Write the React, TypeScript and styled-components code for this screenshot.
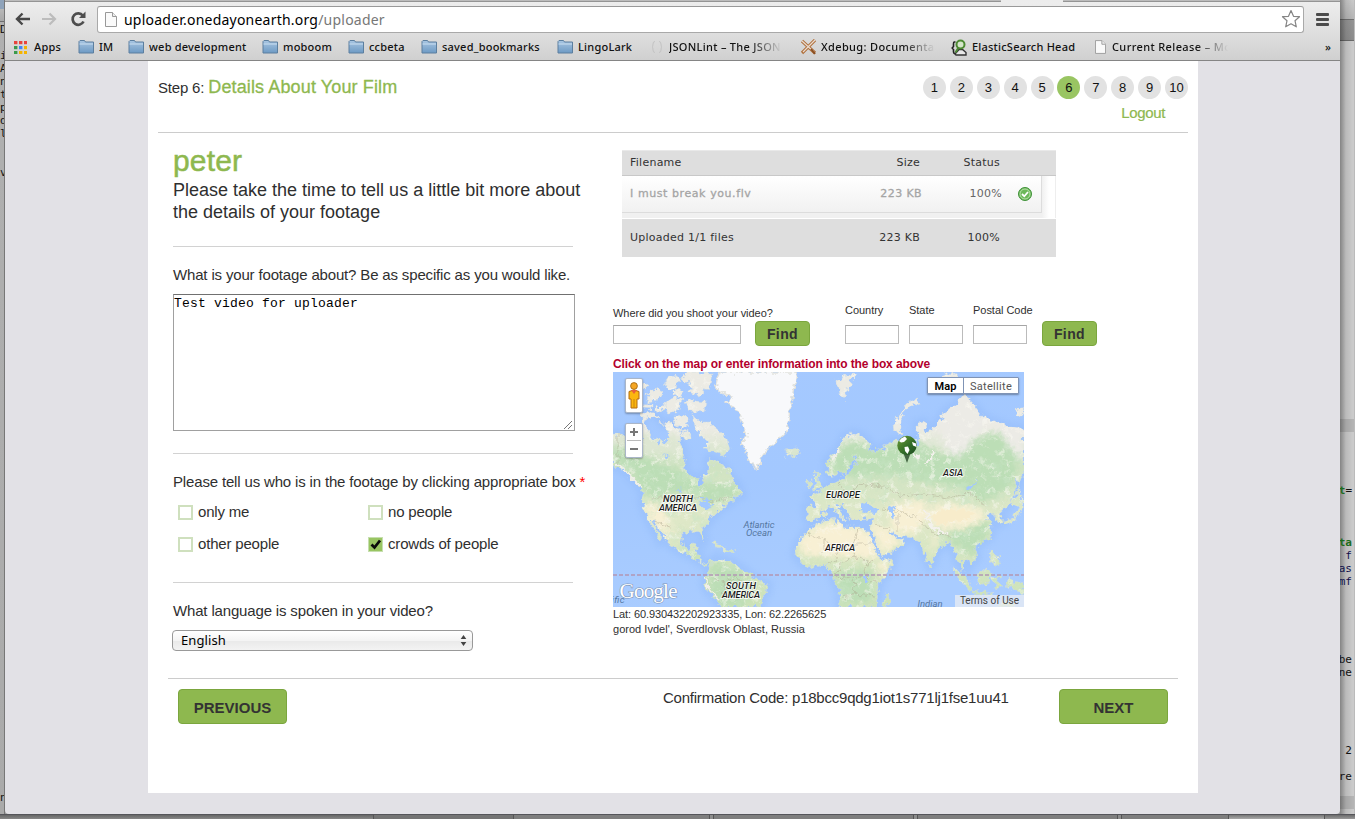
import React from 'react';
import styled, { createGlobalStyle } from 'styled-components';

const GlobalStyle = createGlobalStyle`
  * { box-sizing: border-box; }
  html, body { margin: 0; padding: 0; }
  body { width: 1355px; height: 819px; overflow: hidden; font-family: "Liberation Sans", Helvetica, Arial, sans-serif; color: #2f2f2f; }
`;

const ui = '"Noto Sans", "Lucida Grande", sans-serif';
const green = '#8eb84f';

/* Desktop behind the window */
const Desktop = styled.div`
  display: grid;
  grid-template-columns: 5px 1335px 15px;
  grid-template-rows: 814px 5px;
  width: 1355px;
  height: 819px;
  overflow: hidden;
  background: #9c9c9c;
`;
const LeftStrip = styled.div`
  overflow: hidden;
  border-right: 1px solid #777;
  background: linear-gradient(#8fa3ba 0, #8fa3ba 9px, #b8b8b8 9px, #a8a8a8 21px, #6e6e6e 21px, #6e6e6e 22px, #b0b0b0 22px, #aaa 100%);
  padding-top: 23px;
`;
const RightStrip = styled.div`
  overflow: hidden;
  display: flex;
  flex-direction: column;
  align-items: flex-end;
  padding: 41px 2px 0 0;
  border-right: 1px solid #bbb;
  background:
    linear-gradient(90deg, rgba(0,0,0,.35), rgba(0,0,0,.08) 6px, transparent 13px),
    linear-gradient(#c9c9c9 0, #b5b5b5 19px, #707070 19px, #707070 20px, #949494 20px, #8c8c8c 40px, #6a6a6a 40px, #6a6a6a 41px, #cbcbcb 41px, #cbcbcb 419px, #b4b4b4 419px, #b4b4b4 432px, #cbcbcb 432px, #cbcbcb 796px, #b4b4b4 796px, #b4b4b4 809px, #cbcbcb 809px);
`;
const Code = styled.pre<{ $top?: number; $tone?: string }>`
  margin: ${p => p.$top || 0}px 0 0;
  font: 11px/13px "DejaVu Sans Mono", monospace;
  color: ${p => p.$tone || '#111'};
`;
const Keyword = styled.b`color: #1d6b1d;`;
const BottomStrip = styled.div`
  grid-column: 1 / 4;
  display: flex;
  border-top: 1px solid #55555a;
  background: linear-gradient(#6b6b6b, #999);
`;
const Pane = styled.div<{ $w: number; $c: string }>`
  width: ${p => p.$w}px;
  background: ${p => p.$c};
  border-right: 1px solid #555;
`;

/* Browser window */
const Window = styled.div`
  display: flex;
  flex-direction: column;
  background: #e2e1e6;
  border-radius: 0 0 4px 4px;
  overflow: hidden;
`;
const Tabs = styled.div`
  height: 2px;
  display: flex;
  background: #bcbcbc;
  border-bottom: 1px solid #949494;
`;
const ActiveTab = styled.div`
  width: 62px;
  height: 2px;
  margin-left: 996px;
  background: #ececec;
`;
const NavBar = styled.div`
  height: 32px;
  display: flex;
  align-items: center;
  padding: 2px 11px 0 9px;
  background: linear-gradient(#ededed, #dedede);
`;
const Address = styled.div`
  width: 1207px;
  height: 27px;
  margin-left: 10px;
  display: flex;
  align-items: center;
  padding: 0 2px 0 7px;
  background: #fff;
  border: 1px solid #a9a9a9;
  border-top-color: #999;
  border-radius: 3px;
`;
const Url = styled.div`
  flex: 1;
  margin-left: 7px;
  font: 14px/20px ${ui};
  letter-spacing: 0.22px;
  color: #777;
  padding-top: 1px;
  b { font-weight: 400; color: #000; }
`;
const NavIcon = styled.div<{ $w: number }>`
  width: ${p => p.$w}px;
  display: flex;
  flex: none;
`;
const MenuIcon = styled.div`
  width: 13px;
  height: 13px;
  margin-left: 12px;
  display: flex;
  flex-direction: column;
  justify-content: space-between;
  i { height: 3px; border-radius: 1px; background: #4b4b4b; }
`;
const BookmarkBar = styled.div`
  height: 27px;
  display: flex;
  align-items: center;
  padding-left: 9px;
  background: linear-gradient(#dedede, #d0d0d0);
  border-bottom: 1px solid #858585;
`;
const Bookmark = styled.div<{ $w: number; $gap: number }>`
  width: ${p => p.$w}px;
  flex: none;
  display: flex;
  align-items: center;
  gap: ${p => p.$gap}px;
`;
const BookmarkText = styled.span<{ $max?: number; $ls?: number }>`
  font: 500 11px/16px ${ui};
  letter-spacing: ${p => p.$ls ?? 0.22}px;
  color: #111;
  white-space: nowrap;
  overflow: hidden;
  ${p => p.$max ? `width: ${p.$max}px; -webkit-mask-image: linear-gradient(90deg, #000 ${p.$max - 32}px, transparent);mask-image: linear-gradient(90deg, #000 ${p.$max - 32}px, transparent);` : ''}
`;

/* Page */
const Page = styled.main`
  width: 1050px;
  height: 732px;
  margin-left: 143px;
  background: #fff;
`;
const Header = styled.header`
  height: 72px;
  margin: 0 10px;
  display: flex;
  justify-content: space-between;
  border-bottom: 1px solid #ccc;
`;
const StepTitle = styled.h1`
  margin: 15px 0 0;
  font-size: 15px;
  line-height: 22px;
  font-weight: 400;
  letter-spacing: -0.18px;
  height: 22px;
  span { font-size: 18px; letter-spacing: 0.13px; color: ${green}; -webkit-text-stroke: .3px ${green}; }
`;
const StepsArea = styled.div`
  display: flex;
  flex-direction: column;
  align-items: flex-end;
`;
const Steps = styled.nav`
  display: flex;
  gap: 3.9px;
  margin-top: 15px;
`;
const Step = styled.span<{ $on?: boolean }>`
  width: 23px;
  height: 23px;
  border-radius: 50%;
  background: ${p => p.$on ? '#99c562' : '#e2e2e2'};
  font-size: 13px;
  line-height: 23px;
  text-align: center;
  color: #111;
`;
const Logout = styled.a`
  margin: 5px 23px 0 0;
  font-size: 15px;
  line-height: 18px;
  letter-spacing: -0.35px;
  color: ${green};
  -webkit-text-stroke: .2px ${green};
`;
const Columns = styled.div`
  height: 545px;
  display: grid;
  grid-template-columns: 440px 1fr;
  padding-left: 25px;
`;
const Column = styled.section`min-width: 0;`;
const UserName = styled.h2`
  margin: 11px 0 1px;
  font-size: 30px;
  line-height: 34px;
  font-weight: 400;
  letter-spacing: 0.15px;
  color: ${green};
  -webkit-text-stroke: .5px ${green};
`;
const Intro = styled.p`
  margin: 0;
  font-size: 18px;
  line-height: 22px;
  white-space: nowrap;
`;
const Rule = styled.div<{ $top: number }>`
  width: 400px;
  height: 1px;
  margin-top: ${p => p.$top}px;
  background: #d2d2d2;
`;
const Question = styled.div`
  margin-top: 19px;
  font-size: 15px;
  line-height: 18px;
  letter-spacing: -0.16px;
  white-space: nowrap;
  sup { color: #f00; font-size: 15px; line-height: 0; vertical-align: 0; margin-left: 0; }
`;
const Answer = styled.div`
  width: 402px;
  height: 137px;
  margin-top: 10px;
  padding: 1px 1px 0 0;
  display: flex;
  justify-content: space-between;
  border: 1px solid #a0a0a0;
  border-top-color: #707070;
  font: 13px/16px "Liberation Mono", monospace;
  letter-spacing: .2px;
  color: #000;
  svg { align-self: flex-end; }
`;
const Options = styled.div`
  display: grid;
  grid-template-columns: 190px 190px;
  grid-auto-rows: 32px;
  margin: 5px 0 0 5px;
`;
const Option = styled.label`
  display: flex;
  align-items: center;
  gap: 5px;
  padding-bottom: 1px;
  font-size: 15px;
  letter-spacing: -0.18px;
`;
const Box = styled.i<{ $on?: boolean }>`
  width: 15px;
  height: 15px;
  margin-top: 2px;
  display: flex;
  border: 2px solid ${p => p.$on ? '#c6dfae' : '#cfe0be'};
  border-width: ${p => p.$on ? 1 : 2}px;
  background: ${p => p.$on ? '#99c562' : '#fff'};
`;
const Select = styled.div`
  width: 301px;
  height: 21px;
  margin: 10px 0 0 -1px;
  padding: 0 5px 1px 8px;
  display: flex;
  align-items: center;
  justify-content: space-between;
  border: 1px solid #999;
  border-radius: 4px;
  background: linear-gradient(#fff 0, #f4f4f4 50%, #e9e9e9 51%, #f3f3f3 100%);
  font: 13px/18px ${ui};
  letter-spacing: .1px;
  color: #000;
`;

/* Upload list */
const UploadTable = styled.div`
  width: 434px;
  margin: 17px 0 0 9px;
  font: 11px/14px "DejaVu Sans", Verdana, sans-serif;
  letter-spacing: 0.25px;
  color: #333;
`;
const Cells = styled.div`
  display: flex;
  align-items: center;
  height: 100%;
`;
const HeadRow = styled.div`
  height: 26px;
  padding: 0 0 0 8px;
  background: #dedede;
  border-top: 1px solid #e9e9e9;
  border-bottom: 1px solid #c8c8c8;
`;
const FileArea = styled.div`
  height: 42px;
  padding-right: 1px;
  background: linear-gradient(90deg, #f0f0f0 420px, #fff 427px);
  border-right: 1px solid #eee;
`;
const FileRow = styled.div`
  width: 420px;
  height: 37px;
  padding: 0 0 0 8px;
  border-right: 1px solid #ddd;
  border-bottom: 1px solid #dcdcdc;
  background: linear-gradient(#fff, #f1f1f1);
  color: #a5a5a5;
`;
const FootRow = styled.div`
  height: 38px;
  margin-top: 1px;
  padding: 0 0 1px 8px;
  background: #dedede;
`;
const Cell = styled.span<{ $w: number; $right?: boolean; $tone?: string; $b?: boolean; $ls?: number }>`
  width: ${p => p.$w}px;
  text-align: ${p => p.$right ? 'right' : 'left'};
  color: ${p => p.$tone || 'inherit'};
  -webkit-text-stroke: ${p => p.$b ? '.3px #a5a5a5' : '0'};
  letter-spacing: ${p => p.$ls ?? 0.25}px;
  white-space: nowrap;
`;

/* Location search */
const Search = styled.div`
  height: 43px;
  margin-top: 46px;
  display: flex;
  align-items: flex-end;
`;
const Field = styled.label<{ $w: number; $mr: number; $gap: number }>`
  width: ${p => p.$w}px;
  margin: 0 ${p => p.$mr}px 2px 0;
  font-size: 11px;
  line-height: 13px;
  letter-spacing: -0.03px;
  white-space: nowrap;
  i {
    display: block;
    height: 19px;
    margin-top: ${p => p.$gap}px;
    border: 1px solid #bbb;
    border-top-color: #a5a5a5;
    background: #fff;
  }
`;
const Button = styled.button<{ $w: number; $h: number; $size: number; $mr?: number; $ls?: number }>`
  width: ${p => p.$w}px;
  height: ${p => p.$h}px;
  margin: 0 ${p => p.$mr || 0}px 0 0;
  padding: 1px 0 0;
  border: 1px solid #7ba63e;
  border-radius: 4px;
  background: ${green};
  font: bold ${p => p.$size}px "Liberation Sans", Helvetica, sans-serif;
  letter-spacing: ${p => p.$ls || 0}px;
  color: #333;
`;
const Hint = styled.div`
  margin: 11px 0 1px;
  font-size: 12px;
  line-height: 14px;
  font-weight: 700;
  letter-spacing: -0.1px;
  color: #b3002d;
`;
const MapFrame = styled.div`
  position: relative;
  width: 411px;
  height: 235px;
  overflow: hidden;
  > svg { display: block; }
`;
const MapTypes = styled.div`
  position: absolute;
  top: 5px;
  right: 5px;
  height: 17px;
  display: flex;
  background: #fff;
  border: 1px solid #7f93b5;
  border-radius: 1px;
  box-shadow: 0 1px 2px rgba(0,0,0,.35);
  font: 11px/17px Roboto, sans-serif;
  color: #555;
  span { width: 54px; text-align: center; letter-spacing: .3px; }
  b { width: 36px; text-align: center; color: #000; font-weight: 600; letter-spacing: .1px; border-right: 1px solid #7f93b5; }
`;
const Terms = styled.div`
  position: absolute;
  right: 0;
  bottom: 0;
  width: 69px;
  height: 12px;
  background: rgba(235,238,243,.75);
  font: 10px/12px Roboto, sans-serif;
  text-align: center;
  color: #444;
`;
const Pegman = styled.div`
  position: absolute;
  left: 12px;
  top: 6px;
  width: 18px;
  height: 35px;
  padding: 3px 0 0 2px;
  background: #fff;
  border: 1px solid #aab6c8;
  border-radius: 2px;
  box-shadow: 0 1px 2px rgba(0,0,0,.3);
`;
const Zoom = styled.div`
  position: absolute;
  left: 12px;
  top: 51px;
  width: 18px;
  height: 35px;
  background: #fff;
  border: 1px solid #aab6c8;
  border-radius: 2px;
  box-shadow: 0 1px 2px rgba(0,0,0,.3);
`;
const Place = styled.div<{ $ls: number }>`
  font-size: 11px;
  line-height: 15px;
  letter-spacing: ${p => p.$ls}px;
`;
const Footer = styled.footer`
  height: 46px;
  margin: 0 20px;
  padding: 10px 10px 0;
  display: flex;
  justify-content: space-between;
  border-top: 1px solid #ccc;
`;
const Confirm = styled.div`
  width: 396px;
  margin-left: 376px;
  font-size: 15px;
  line-height: 18px;
  letter-spacing: -0.23px;
  white-space: nowrap;
`;

const Folder = () => (
  <svg width="17" height="14" viewBox="0 0 17 14">
    <defs><linearGradient id="fold" x1="0" y1="0" x2="0" y2="1"><stop offset="0" stopColor="#a9c6e2" /><stop offset="1" stopColor="#6d9ac4" /></linearGradient></defs>
    <path d="M1 13V1.5L2 .5H6.5L7.5 2H15.5V13Z" fill="url(#fold)" stroke="#5c7f9f" />
    <path d="M1.5 4H15" stroke="#c9def0" />
  </svg>
);
const PageIcon = ({ w, h }: { w: number; h: number }) => (
  <svg width={w} height={h} viewBox="0 0 12 15"><path d="M.5.5H7.5L11.5 4.5V14.5H.5Z" fill="#fafafa" stroke="#999" /><path d="M7.5.5V4.5H11.5" fill="#eee" stroke="#999" /></svg>
);
const AppsIcon = () => {
  const c = ['#e8453c', '#e8453c', '#e8453c', '#3b9a4b', '#4285f4', '#f4b400', '#3b9a4b', '#f4b400', '#f4b400'];
  return <svg width="13" height="13">{c.map((f, i) => <rect key={i} x={(i % 3) * 5} y={Math.floor(i / 3) * 5} width="3.4" height="3.2" fill={f} />)}</svg>;
};
const BracesIcon = () => <svg width="12" height="14" fill="none" stroke="#c3c3c3"><path d="M4 1.5Q2 1.5 2 4 2 7 1 7 2 7 2 10 2 12.500 4 12.500M8 1.500Q10 1.500 10 4 10 7 11 7 10 7 10 10 10 12.500 8 12.500" /></svg>;
const XIcon = () => (
  <svg width="17" height="16" fill="none"><path d="M2 2L15 14M15 1L2 14" stroke="#b0703c" strokeWidth="3.200" /><path d="M2 2L14 13M15 1L3 13" stroke="#eadcd0" strokeWidth="1.200" /><path d="M11 10L15 15" stroke="#8a4f22" strokeWidth="2" /></svg>
);
const SearchHeadIcon = () => (
  <svg width="17" height="17" fill="none"><path d="M4.500 3H3Q2.500 3 2.500 5V7.500L1.200 9 2.500 10.500V13Q2.500 14.500 4 14.500" stroke="#222" strokeWidth="1.600" /><path d="M4 15L8 10.500H11.500L15 13.500V16H5Z" fill="#e8e8e8" stroke="#333" strokeWidth="1.400" /><circle cx="9.500" cy="5.500" r="4" fill="#d5e6cb" stroke="#4d8a33" strokeWidth="2" /><path d="M7.500 8.500L4.500 13.500" stroke="#4d8a33" strokeWidth="2" /></svg>
);

/* World map, in the 411 x 235 space of its frame */
const NA = 'M0 62L12 64 29 65 29 42 34 39 44 44 50 52 58 50 62 56 68 60 66 70 70 78 72 90 71 98 76 103 84 106 87 113 90 112 91 103 97 97 95 90 97 86 107 90 113 98 118 106 125 113 129 123 120 126 119 130 109 135 99 145 95 151 88 158 92 166 91 169 87 163 84 159 70 161 68 168 70 176 77 178 79 172 84 173 81 180 86 182 87 190 95 192 100 188 99 193 92 193 82 187 73 182 67 180 57 173 53 166 45 156 41 149 38 149 43 156 49 169 47 170 41 158 34 145 29 131 30 121 26 114 17 105 10 98 0 94Z';
const SA = 'M98 189L109 187 119 190 128 196 137 203 142 207 155 212 154 220 149 228 147 235 107 235 104 228 95 220 91 211 95 202 97 194Z';
const AF = 'M202 154L192 161 184 173 182 183 189 191 195 196 212 193 216 197 220 202 222 210 226 219 227 235 262 235 264 228 265 215 272 203 279 194 280 187 269 188 265 184 258 168 253 157 244 155 232 155 226 152 223 146 210 149Z';
const EA = 'M193 135L194 147 199 150 206 145 210 137 217 134 223 139 229 146 231 143 224 135 228 132 234 140 238 148 242 146 248 147 259 146 257 157 261 163 265 178 269 185 287 175 291 170 283 165 276 162 275 158 286 164 301 166 307 171 312 185 317 195 321 190 321 183 329 175 336 169 341 178 344 188 349 198 352 199 349 190 354 187 358 193 364 185 361 176 366 172 377 165 379 153 374 145 379 141 386 152 391 149 387 141 397 132 404 119 411 98V58L397 55 384 51 370 45 357 28 350 23 344 32 331 41 324 52 314 61 311 50 304 52 304 64 298 70 284 68 270 75 263 79 256 80 257 72 248 63 240 61 231 65 225 78 214 88 214 101 221 105 225 98 231 103 239 89 243 82 244 91 237 100 226 109 218 112 207 119 197 124 204 130 203 135Z';
const ISLES = 'M52 55L45 47 35 44 31 52 39 66 52 70 58 64ZM80 42L86 50 96 50 105 58 114 67 117 78 110 84 100 79 91 76 97 70 87 63 82 56ZM62 44L72 43 76 52 70 58 63 54ZM34 22L42 16 51 20 44 28 35 30ZM52 30L62 25 68 27 66 37 57 41 50 38ZM66 6L78 0 99 0 97 14 86 24 74 21 80 13ZM72 28L93 30 91 40 77 39ZM54 6L64 3 66 12 60 18 51 14ZM43 35L54 31 51 38 43 41ZM60 18L72 19 68 25 60 22ZM32 32L40 31 40 37 31 36ZM67 60L76 58 77 66 70 68ZM28 14L34 12 34 18 28 18ZM96 95L106 90 116 97 121 110 112 113 96 110ZM172 78L184 76 187 81 179 85 173 83ZM222 8L230 4 242 2 237 12 230 28 226 18ZM202 100L207 102 206 110 210 116 200 120 203 111ZM194 108L199 109 197 116 193 114ZM304 26L294 31 286 43 281 54 282 60 288 61 286 52 290 42 297 34 305 31ZM98 170L105 172 113 176 109 177 100 173ZM112 177L121 179 118 182 112 180ZM328 4L340 0 346 5 336 10ZM395 130L401 128 408 120 411 133 407 140 399 150 391 154 390 151 402 144 405 134ZM403 106L406 112 406 124 402 120ZM342 195L351 204 360 217 356 219 345 206ZM364 202L374 196 379 204 373 213 365 210ZM358 219L380 221 376 224 360 222ZM379 206L389 203 384 210 390 214 383 218ZM377 177L384 182 387 194 378 190ZM395 208L411 211V224L403 218 392 214ZM384 235L389 228 399 232 403 235ZM270 235L271 226 277 221 276 230 273 235ZM228 145L235 147 229 149ZM210 140L213 139 213 146 210 145ZM403 38L411 35V42L404 44Z';
const GREEN_PATCHES = 'M20 80L50 92 70 100 90 112 125 112 128 122 100 133 75 120 55 122 40 130 20 105ZM100 190L125 195 140 212 130 235 106 235 94 212ZM215 95L232 72 245 68 260 78 300 68 330 82 380 60 408 70 400 115 370 130 345 115 310 110 280 102 240 105ZM222 200L258 198 258 230 228 230ZM330 165L375 140 378 160 360 185ZM67 180L90 190 97 192 80 180ZM0 72L25 80 20 98 0 90Z';
const SAND_PATCHES = 'M30 128L50 138 62 165 52 165 34 142ZM185 170L200 155 225 150 255 158 268 184 260 187 190 183ZM256 150L275 156 288 170 270 182ZM312 140L325 132 360 134 376 146 350 158 320 154ZM275 133L310 128 315 145 300 163 280 160ZM262 192L279 187 270 205ZM320 165L326 162 318 185Z';
const Relief = () => (
  <svg width="411" height="235" viewBox="0 0 411 235">
    <defs>
      <linearGradient id="sea" x1="0" y1="0" x2="0.200" y2="1"><stop offset="0" stopColor="#a5c9ff" /><stop offset=".5" stopColor="#a3c8ff" /><stop offset="1" stopColor="#a9ccff" /></linearGradient>
      <linearGradient id="land" x1="0" y1="0" x2="0" y2="1"><stop offset=".24" stopColor="#ecebe4" /><stop offset=".4" stopColor="#cfe3c2" /><stop offset=".62" stopColor="#dfe8c8" /><stop offset="1" stopColor="#cbe2b8" /></linearGradient>
      <linearGradient id="pin" x1="0" y1="0" x2="1" y2="1"><stop offset="0" stopColor="#6f9e35" /><stop offset=".6" stopColor="#2f6a28" /><stop offset="1" stopColor="#1f4a20" /></linearGradient>
      <filter id="coast" x="-2%" y="-2%" width="104%" height="104%"><feTurbulence type="fractalNoise" baseFrequency=".2" numOctaves="3" seed="4" /><feDisplacementMap in="SourceGraphic" scale="9" xChannelSelector="R" yChannelSelector="G" /></filter>
      <filter id="soft" x="-5%" y="-5%" width="110%" height="110%"><feGaussianBlur stdDeviation="3" /></filter>
      <filter id="forest" x="0" y="0" width="100%" height="100%"><feTurbulence type="fractalNoise" baseFrequency=".09" numOctaves="4" seed="11" /><feColorMatrix values="0 0 0 0 .58  0 0 0 0 .78  0 0 0 0 .56  3.200 0 0 0 -1.600" /></filter>
      <filter id="ridges" x="0" y="0" width="100%" height="100%"><feTurbulence type="fractalNoise" baseFrequency=".13" numOctaves="4" seed="23" /><feColorMatrix values="0 0 0 0 .97  0 0 0 0 .96  0 0 0 0 .9  0 4 0 0 -2.200" /></filter>
      <clipPath id="landClip"><path d={NA + SA + AF + EA + ISLES} /></clipPath>
      <clipPath id="forestClip"><path d="M0 85L70 92 100 100H135V235H0ZM200 95L240 70 300 72 340 90 411 70V140L340 130 200 130ZM222 195H262V235H222ZM325 160H411V235H325Z" /></clipPath>
    </defs>
    <rect width="411" height="235" fill="url(#sea)" />
    <g fill="none" stroke="#8fb8f8" strokeWidth="9" opacity=".4" filter="url(#soft)"><path d={NA + SA + AF + EA} /></g>
    <g filter="url(#coast)">
      <path d={NA + SA + AF + EA + ISLES} fill="url(#land)" stroke="#cfdbe3" strokeWidth=".5" />
      <g clipPath="url(#landClip)">
        <g filter="url(#soft)">
          <path d={GREEN_PATCHES} fill="#bcdeb6" />
          <path d={SAND_PATCHES} fill="#f8f0d4" />
          <path d="M325 50L350 20 375 50 350 82 335 84ZM384 50L411 55V90L395 75Z" fill="#ecebe6" />
          <path d="M0 62H60L70 80 40 75 20 80 0 72Z" fill="#dde6d2" />
        </g>
        <g clipPath="url(#forestClip)"><rect width="411" height="235" filter="url(#forest)" opacity=".6" /></g>
        <rect width="411" height="235" filter="url(#ridges)" opacity=".55" />
        <path d="M317 143L330 138 350 137 362 143 345 149 325 152Z" fill="#f8eccb" />
        <g fill="none" stroke="#ada68f" strokeWidth=".6" opacity=".8">
          <path d="M40 126H90L100 130 119 124M42 150L60 156M5 60V92L14 100M192 161L211 168 225 176 242 172 245 156M242 172L258 172M211 168V180M225 176L222 190 213 192M242 172L240 184 255 190 262 186M240 184L228 192 222 205 240 207 252 203 255 190M240 207L242 222 230 225M252 203L264 212M242 222L262 224M213 118L220 127 230 122 240 125 245 112M230 122L226 110M245 112L270 115 290 124 310 122 335 126 357 121 372 134M270 137L290 140 305 146 318 160M285 143V160M318 160L338 164M262 152L275 158M100 206L112 210 122 206 130 210M112 210L110 222 124 228" />
        </g>
        <path d="M312 138L318 155 335 162M300 78L306 88M321 80L312 92" fill="none" stroke="#f3f1ec" strokeWidth="2.500" />
      </g>
      <g fill="#a3c8ff">
        <path d="M247 132L254 130 258 135 265 137 262 142 252 140 247 139ZM275 132L282 136 280 140 283 147 277 145 277 138ZM354 115L364 108 363 112 356 118ZM85 132L95 128 100 134 91 137ZM87 128L92 124 98 128ZM66 114L68 122 64 118ZM50 82L56 85 52 88ZM45 68L50 72 46 75ZM302 58L307 66 305 74 300 76 304 67ZM251 205H255V210H251Z" />
      </g>
      <g fill="none" stroke="#f1efe9" strokeWidth="2"><path d="M226 78L217 89M102 16L119 25 125 38M411 60L390 56M4 91L17 104 28 115M93 205L95 216 106 228" /></g>
      <path d="M106 0L102 16 119 25 113 31 125 38 130 51 134 65 129 68 132 76 137 90 144 97 149 83 159 73 174 60 177 38 181 15 184 0Z" fill="#f8f9fb" stroke="#e2e3df" strokeWidth="1.500" />
    </g>
    <path d="M0 203H411" stroke="#b296b4" strokeWidth="1.300" strokeDasharray="4 2" />
    <g fontFamily="Roboto, sans-serif" fontStyle="italic" fontSize="9.500" fontWeight="500" fill="#1c1c1c" stroke="#fff" strokeOpacity=".75" strokeWidth="2" paintOrder="stroke" textAnchor="middle">
      <text x="65" y="130" textLength="30">NORTH</text><text x="65" y="139" textLength="38">AMERICA</text>
      <text x="128" y="217" textLength="30">SOUTH</text><text x="128" y="226" textLength="38">AMERICA</text>
      <text x="230" y="126" textLength="34">EUROPE</text><text x="227" y="179" textLength="30">AFRICA</text><text x="340" y="104" textLength="20">ASIA</text>
    </g>
    <g fontFamily="Roboto, sans-serif" fontStyle="italic" fontSize="9.500" fill="#55779f" textAnchor="middle">
      <text x="146" y="156" textLength="31">Atlantic</text><text x="146" y="164" textLength="26">Ocean</text><text x="317" y="235" textLength="25">Indian</text><text x="5" y="231" textLength="13">ific</text><text x="5" y="240">an</text>
    </g>
    <text x="6.500" y="225.500" fontFamily="Liberation Serif, serif" fontSize="21" textLength="58" fill="#fff" stroke="#8197b8" strokeWidth="1.200" paintOrder="stroke">Google</text>
    <g>
      <path d="M290 80L294 91 298 80Z" fill="#446644" />
      <circle cx="294" cy="73.500" r="9.700" fill="url(#pin)" />
      <path d="M286 69A10 10 0 0 1 292 64.500L294 67 291 70 288 70.500ZM299 70L303 71.500 303.500 75 300 73.500ZM291.500 75L295 74.500 296.500 78 294.500 82 292 79Z" fill="#fff" />
    </g>
  </svg>
);

const marks: [React.ReactNode, string, number, number, number?, number?][] = [
  [<AppsIcon />, 'Apps', 64, 7], [<Folder />, 'IM', 50, 4], [<Folder />, 'web development', 134, 4], [<Folder />, 'moboom', 86, 4],
  [<Folder />, 'ccbeta', 73, 4], [<Folder />, 'saved_bookmarks', 136, 4], [<Folder />, 'LingoLark', 94, 4],
  [<BracesIcon />, 'JSONLint – The JSON', 149, 6, 113, 0.3], [<XIcon />, 'Xdebug: Documentation', 151, 4, 114, 0.35],
  [<SearchHeadIcon />, 'ElasticSearch Head', 144, 4], [<PageIcon w={11} h={14} />, 'Current Release – Mo', 230, 6, 116, 0.38],
];

export default function App() {
  return (
    <>
      <GlobalStyle />
      <Desktop>
        <LeftStrip><Code>{'D\n\ni\nA\nn\nt\np\nd\nl\n\n\nv'}</Code><Code $top={612}>n</Code></LeftStrip>
        <Window>
          <Tabs><ActiveTab /></Tabs>
          <NavBar>
            <NavIcon $w={27}><svg width="18" height="16" fill="none" stroke="#484848" strokeWidth="2.400"><path d="M16 8H3M8.500 2.500L3 8 8.500 13.500" /></svg></NavIcon>
            <NavIcon $w={29}><svg width="18" height="16" fill="none" stroke="#bcbcbc" strokeWidth="2.200"><path d="M1 8H14M8.500 2.500L14 8 8.500 13.500" /></svg></NavIcon>
            <NavIcon $w={17}><svg width="17" height="16" fill="none"><path d="M12.800 4.500A5.700 5.700 0 1 0 13.500 10.500" stroke="#4d4d4d" strokeWidth="2.700" /><path d="M15.500 .5V7H9Z" fill="#4d4d4d" /></svg></NavIcon>
            <Address>
              <PageIcon w={12} h={15} />
              <Url><b>uploader.onedayonearth.org</b>/uploader</Url>
              <svg width="20" height="20"><path d="M10 1.500L12.500 7.300 18.500 7.700 14 11.700 15.300 17.800 10 14.800 4.700 17.800 6 11.700 1.500 7.700 7.500 7.300Z" fill="#fff" stroke="#858585" strokeWidth="1.200" strokeLinejoin="round" /></svg>
            </Address>
            <MenuIcon><i /><i /><i /></MenuIcon>
          </NavBar>
          <BookmarkBar>
            {marks.map(([icon, text, w, gap, max, ls]) => (
              <Bookmark key={text} $w={w} $gap={gap}>{icon}<BookmarkText $max={max} $ls={ls}>{text}</BookmarkText></Bookmark>
            ))}
            <BookmarkText>»</BookmarkText>
          </BookmarkBar>
          <Page>
            <Header>
              <StepTitle>Step 6: <span>Details About Your Film</span></StepTitle>
              <StepsArea>
                <Steps>{[1, 2, 3, 4, 5, 6, 7, 8, 9, 10].map(n => <Step key={n} $on={n === 6}>{n}</Step>)}</Steps>
                <Logout>Logout</Logout>
              </StepsArea>
            </Header>
            <Columns>
              <Column>
                <UserName>peter</UserName>
                <Intro>Please take the time to tell us a little bit more about<br />the details of your footage</Intro>
                <Rule $top={23} />
                <Question>What is your footage about? Be as specific as you would like.</Question>
                <Answer>Test video for uploader<svg width="10" height="10" stroke="#777"><path d="M1 9L9 1M5 9L9 5" /></svg></Answer>
                <Rule $top={22} />
                <Question>Please tell us who is in the footage by clicking appropriate box <sup>*</sup></Question>
                <Options>
                  <Option><Box />only me</Option>
                  <Option><Box />no people</Option>
                  <Option><Box />other people</Option>
                  <Option><Box $on><svg width="13" height="13" fill="none" stroke="#0b0b0b" strokeWidth="2.800"><path d="M2.500 6.500L5.500 9.500 11 2.500" /></svg></Box>crowds of people</Option>
                </Options>
                <Rule $top={22} />
                <Question>What language is spoken in your video?</Question>
                <Select>English<svg width="7" height="11" fill="#444"><path d="M3.500 0L6.300 4H.7ZM3.500 11L.7 7H6.300Z" /></svg></Select>
              </Column>
              <Column>
                <UploadTable>
                  <HeadRow><Cells><Cell $w={230}>Filename</Cell><Cell $w={60} $right>Size</Cell><Cell $w={80} $right>Status</Cell></Cells></HeadRow>
                  <FileArea>
                    <FileRow><Cells><Cell $w={230} $b $ls={0.58}>I must break you.flv</Cell><Cell $w={62} $right $b $ls={0.4}>223 KB</Cell><Cell $w={80} $right $tone="#666">100%</Cell>
                      <CheckBadge width="16" height="16"><circle cx="8" cy="8" r="6.500" fill="#6cb85a" stroke="#3f9138" /><circle cx="8" cy="8" r="5" fill="none" stroke="#b6e0a8" /><path d="M5 8L7.300 10.300 11 6" fill="none" stroke="#fff" strokeWidth="1.800" /></CheckBadge>
                    </Cells></FileRow>
                  </FileArea>
                  <FootRow><Cells><Cell $w={230}>Uploaded 1/1 files</Cell><Cell $w={60} $right>223 KB</Cell><Cell $w={80} $right>100%</Cell></Cells></FootRow>
                </UploadTable>
                <Search>
                  <Field $w={128} $mr={14} $gap={5}>Where did you shoot your video?<i /></Field>
                  <Button $w={55} $h={25} $size={14} $mr={35} $ls={0.4}>Find</Button>
                  <Field $w={54} $mr={10} $gap={8}>Country<i /></Field>
                  <Field $w={54} $mr={10} $gap={8}>State<i /></Field>
                  <Field $w={54} $mr={15} $gap={8}>Postal Code<i /></Field>
                  <Button $w={55} $h={25} $size={14} $ls={0.4}>Find</Button>
                </Search>
                <Hint>Click on the map or enter information into the box above</Hint>
                <MapFrame>
                  <Relief />
                  <Pegman><svg width="12" height="28"><circle cx="6" cy="4" r="3.400" fill="#f5a623" stroke="#9c6210" strokeWidth=".8" /><path d="M1 9.500Q6 6.500 11 9.500V17H9V26H3V17H1Z" fill="#fbb60e" stroke="#b26a10" /><path d="M3 8H9L6 12Z" fill="#e8603c" /><path d="M6 17V26" stroke="#c98511" /></svg></Pegman>
                  <Zoom><svg width="16" height="33"><path d="M4 8H12M8 4V12M4 25H12" stroke="#777" strokeWidth="2" /><path d="M1 16.500H15" stroke="#bbb" /></svg></Zoom>
                  <MapTypes><b>Map</b><span>Satellite</span></MapTypes>
                  <Terms>Terms of Use</Terms>
                </MapFrame>
                <Place $ls={-0.1}>Lat: 60.930432202923335, Lon: 62.2265625</Place>
                <Place $ls={0.02}>gorod Ivdel', Sverdlovsk Oblast, Russia</Place>
              </Column>
            </Columns>
            <Footer>
              <Button $w={109} $h={35} $size={15}>PREVIOUS</Button>
              <Confirm>Confirmation Code: p18bcc9qdg1iot1s771lj1fse1uu41</Confirm>
              <Button $w={109} $h={35} $size={15}>NEXT</Button>
            </Footer>
          </Page>
        </Window>
        <RightStrip>
          <Code $top={443}><Keyword>t</Keyword>=</Code>
          <Code $top={39}><Keyword>ta</Keyword></Code>
          <Code $tone="#12124a">{' f\nas\nmf'}</Code>
          <Code $top={65}>{'be\nne'}</Code>
          <Code $top={65}>{' 2\n\nre'}</Code>
        </RightStrip>
        <BottomStrip>
          <Pane $w={374} $c="linear-gradient(#666,#888)" /><Pane $w={140} $c="#747474" /><Pane $w={196} $c="#7e7e7e" /><Pane $w={4} $c="#8c8c8c" />
          <Pane $w={200} $c="#7e7e7e" /><Pane $w={4} $c="#8c8c8c" /><Pane $w={200} $c="#7e7e7e" /><Pane $w={4} $c="#8c8c8c" /><Pane $w={107} $c="#7e7e7e" /><Pane $w={96} $c="linear-gradient(#777,#aaa)" />
        </BottomStrip>
      </Desktop>
    </>
  );
}

const CheckBadge = styled.svg`
  margin-left: 15px;
`;
